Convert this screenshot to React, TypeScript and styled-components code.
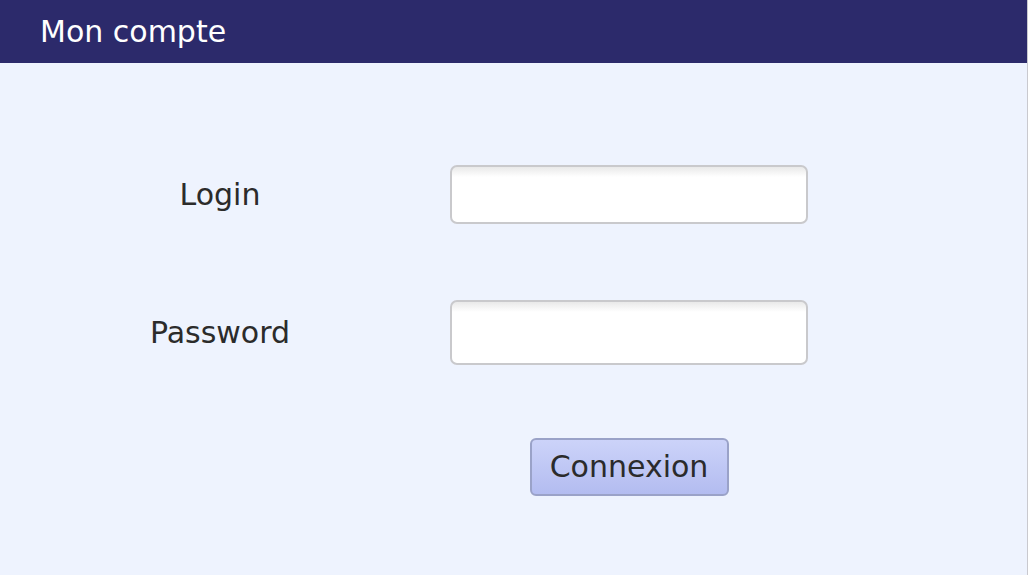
import React from "react";
import styled, { createGlobalStyle } from "styled-components";

const Global = createGlobalStyle`
  html, body { margin: 0; padding: 0; }
  body {
    background: #eef3fe;
    font-family: "DejaVu Sans", Verdana, sans-serif;
  }
`;

const Page = styled.div`
  width: 1028px;
  height: 575px;
  box-sizing: border-box;
  border-right: 1px solid #c9c9cf;
  background: #eef3fe;
  display: flex;
  flex-direction: column;
`;

const Header = styled.header`
  height: 63px;
  background: #2c2a6b;
  color: #ffffff;
  display: flex;
  align-items: center;
  padding-left: 40px;
  box-sizing: border-box;
  font-size: 30px;
`;

const Form = styled.form`
  display: flex;
  flex-direction: column;
  margin-top: 102px;
`;

const Row = styled.div<{ $mb: number }>`
  display: grid;
  grid-template-columns: 440px 358px;
  column-gap: 10px;
  align-items: center;
  margin-bottom: ${(p) => p.$mb}px;
`;

const Label = styled.label`
  text-align: center;
  font-size: 30px;
  color: #2b2b2b;
`;

const Field = styled.input<{ $h: number }>`
  box-sizing: border-box;
  width: 358px;
  height: ${(p) => p.$h}px;
  border: 2px solid #c9c9cc;
  border-radius: 7px;
  background: linear-gradient(#e9e9e9 0px, #ffffff 10px, #ffffff 100%);
  outline: none;
  font-family: inherit;
  font-size: 22px;
`;

const ButtonCell = styled.div`
  grid-column: 2;
  display: flex;
  justify-content: center;
`;

const Button = styled.button`
  box-sizing: border-box;
  width: 199px;
  height: 58px;
  border: 2px solid #9aa2c8;
  border-radius: 6px;
  background: linear-gradient(#ccd3f9, #b3bcf0);
  color: #2b2b2b;
  font-family: inherit;
  font-size: 30px;
  padding: 0 0 2px;
`;

export default function App() {
  return (
    <>
      <Global />
      <Page>
        <Header>Mon compte</Header>
        <Form onSubmit={(e) => e.preventDefault()}>
          <Row $mb={76}>
            <Label htmlFor="login">Login</Label>
            <Field id="login" type="text" $h={59} />
          </Row>
          <Row $mb={73}>
            <Label htmlFor="password">Password</Label>
            <Field id="password" type="password" $h={65} />
          </Row>
          <Row $mb={0}>
            <ButtonCell>
              <Button type="submit">Connexion</Button>
            </ButtonCell>
          </Row>
        </Form>
      </Page>
    </>
  );
}
